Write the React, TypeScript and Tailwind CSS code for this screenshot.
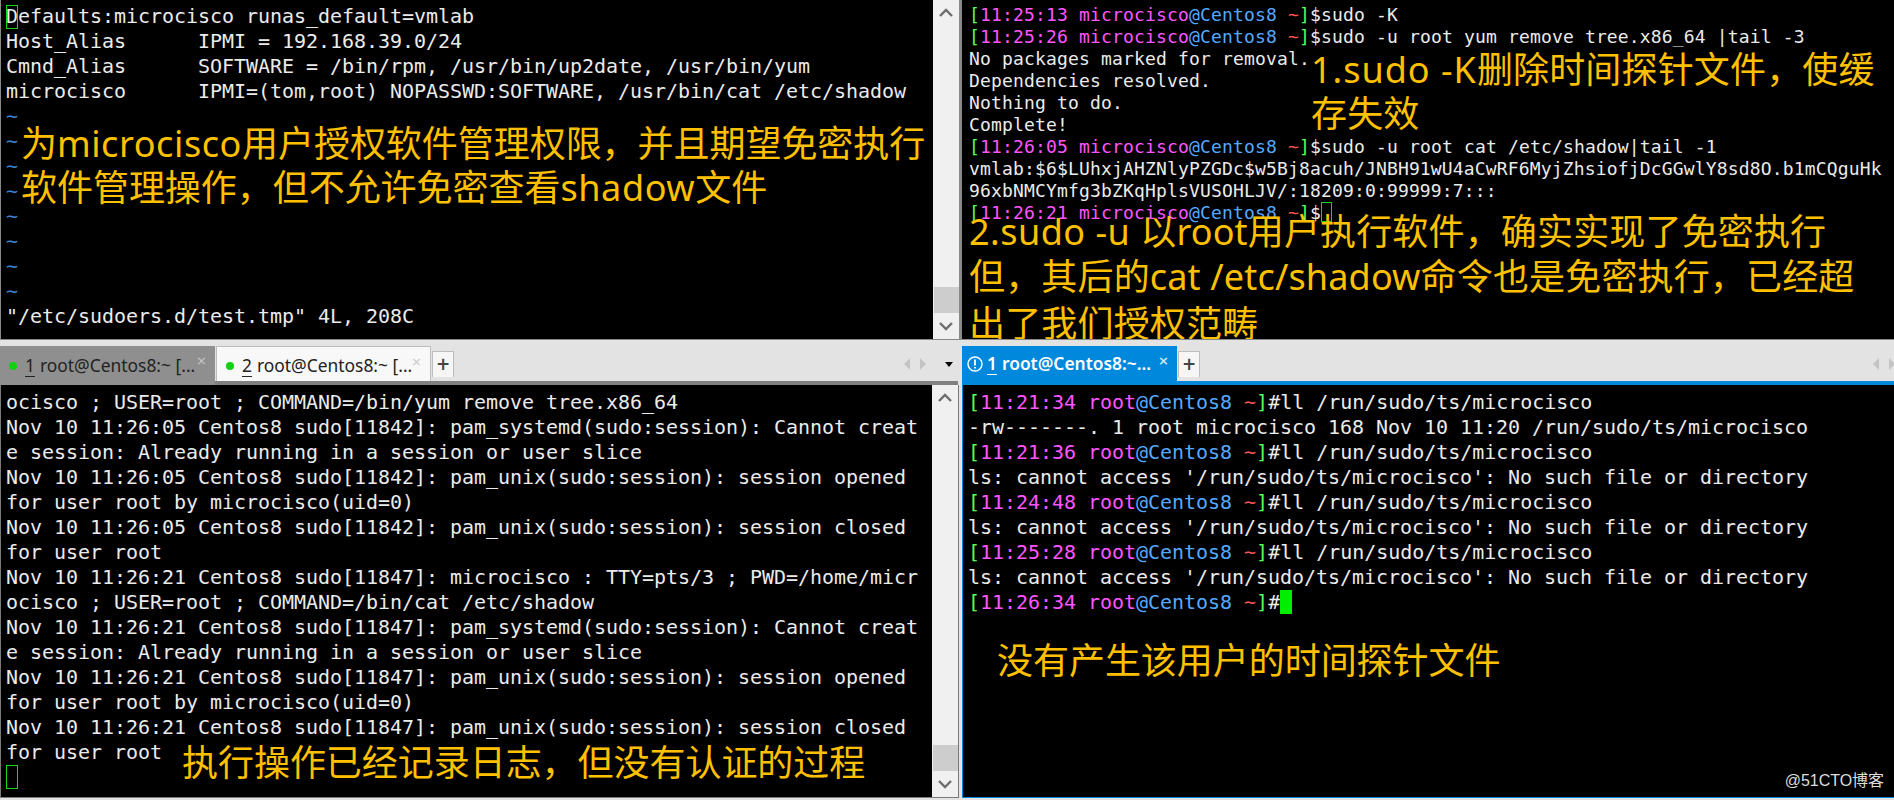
import React from "react";

const mono = "font-['DejaVu_Sans_Mono','Liberation_Mono',monospace]";

function Prompt({ time, user, sign, children }: { time: string; user: string; sign: string; children?: React.ReactNode }) {
  return (
    <>
      <span className="text-[#55ff55]">[</span>
      <span className="text-[#ff55ff]">{time} {user}</span>
      <span className="text-[#55aaff]">@Centos8</span>
      <span> </span>
      <span className="text-[#ff5555]">~</span>
      <span className="text-[#55ff55]">]</span>
      <span>{sign}</span>
      {children}
    </>
  );
}

function Line({ children }: { children?: React.ReactNode }) {
  return <div className="whitespace-pre">{children || " "}</div>;
}

function Note({ className, children }: { className: string; children: React.ReactNode }) {
  return (
    <div className={"absolute whitespace-pre text-[36px] leading-[46px] text-[#ffc000] font-['Noto_Sans','Noto_Sans_CJK_SC',sans-serif] " + className}>
      {children}
    </div>
  );
}

function Scrollbar({ thumbClass }: { thumbClass: string }) {
  return (
    <div className="w-[26px] shrink-0 bg-[#f0f0f0] flex flex-col items-center justify-between py-[8px] relative">
      <svg width="14" height="10" viewBox="0 0 14 10" className="text-[#6d6d6d]">
        <path d="M1 8 L7 2 L13 8" fill="none" stroke="currentColor" strokeWidth="2.4" />
      </svg>
      <div className={"absolute left-[1px] right-0 h-[26px] bg-[#cdcdcd] " + thumbClass} />
      <svg width="14" height="10" viewBox="0 0 14 10" className="text-[#6d6d6d]">
        <path d="M1 2 L7 8 L13 2" fill="none" stroke="currentColor" strokeWidth="2.4" />
      </svg>
    </div>
  );
}

function Arrows() {
  return (
    <div className="flex items-center gap-[10px]">
      <svg width="6" height="12" viewBox="0 0 6 12"><path d="M6 0 V12 L0 6 Z" fill="#c4c4c4" /></svg>
      <svg width="6" height="12" viewBox="0 0 6 12"><path d="M0 0 V12 L6 6 Z" fill="#c4c4c4" /></svg>
    </div>
  );
}

function Close({ light }: { light?: boolean }) {
  return (
    <span className={"absolute right-[8px] top-[8px] text-[13px] leading-[13px] font-['DejaVu_Sans',sans-serif] " + (light ? "text-[#cfe6f7]" : "text-[#c8c8c8]")}>×</span>
  );
}

function PlusTab() {
  return (
    <div className="mt-[11px] ml-[1px] h-[26px] w-[22px] bg-[#f6f6f6] border border-b-0 border-[#bdbdbd] flex items-center justify-center text-[#444] font-bold text-[17px] leading-none font-['DejaVu_Sans',sans-serif]">
      +
    </div>
  );
}

function GreenDot() {
  return <span className="w-[8px] h-[8px] rounded-full bg-[#10d010] shrink-0 ml-[9px] mr-[8px]" />;
}

const tabFont = "font-['Noto_Sans',sans-serif] text-[17.4px] leading-none";

export default function App() {
  return (
    <div className={"w-[1894px] h-[800px] overflow-hidden bg-[#e3e3e3] flex text-[#ebebeb] " + mono}>
      {/* left column */}
      <div className="w-[962px] shrink-0 flex flex-col">
        <div className="h-[339px] flex border-l border-[#8a8a8a]">
          <div className="w-[932px] bg-black pt-[4px] pl-[5px] text-[20px] leading-[25px] tracking-[-0.04px] relative overflow-hidden">
            <Line>
              <span className="relative">
                <span className="absolute left-0 top-[1px] w-[12px] h-[24px] border border-[#15d815]" />
                Defaults:microcisco runas_default=vmlab
              </span>
            </Line>
            <Line>Host_Alias      IPMI = 192.168.39.0/24</Line>
            <Line>Cmnd_Alias      SOFTWARE = /bin/rpm, /usr/bin/up2date, /usr/bin/yum</Line>
            <Line>microcisco      IPMI=(tom,root) NOPASSWD:SOFTWARE, /usr/bin/cat /etc/shadow</Line>
            {Array.from({ length: 8 }).map((_, i) => (
              <Line key={i}><span className="text-[#3f86d8]">~</span></Line>
            ))}
            <Line>"/etc/sudoers.d/test.tmp" 4L, 208C</Line>
            <Note className="left-[20px] top-[121px]">为<span className="tracking-[0.6px]">microcisco</span>用户授权软件管理权限，并且期望免密执行</Note>
            <Note className="left-[20px] top-[165px]">软件管理操作，但不允许免密查看<span className="tracking-[0.6px]">shadow</span>文件</Note>
          </div>
          <Scrollbar thumbClass="top-[287px]" />
          <div className="flex-1 bg-[#8a8a8a]" />
        </div>
        <div className="h-[1px] bg-[#8a8a8a]" />
        {/* left tab bar */}
        <div className="h-[45px] flex relative">
          <div className="absolute left-[215px] right-[4px] bottom-0 h-[4px] bg-[#808080]" />
          <div className="flex items-start mt-[6px] relative">
            <div className={"relative w-[215px] h-[39px] bg-[#8f8f8f] flex items-center text-[#222] " + tabFont}>
              <GreenDot />
              <span className="underline underline-offset-[4px] mr-[5px]">1</span>
              <span>root@Centos8:~ [...</span>
              <Close />
            </div>
            <div className={"relative ml-[1px] w-[215px] h-[35px] bg-[#f8f8f8] border border-b-0 border-[#bdbdbd] flex items-center text-[#222] pt-[3px] " + tabFont}>
              <GreenDot />
              <span className="underline underline-offset-[4px] mr-[5px]">2</span>
              <span>root@Centos8:~ [...</span>
              <Close />
            </div>
          </div>
          <PlusTab />
          <div className="ml-auto mr-[9px] flex items-center gap-[19px] mt-[5px] h-[36px] pt-[2px]">
            <Arrows />
            <svg width="8" height="5" viewBox="0 0 8 5"><path d="M0 0 H8 L4 5 Z" fill="#000" /></svg>
          </div>
        </div>
        {/* left lower pane */}
        <div className="w-[959px] h-[413px] flex border-l border-r border-b border-[#7a7a7a]">
          <div className="w-[931px] bg-black pt-[5px] pl-[5px] text-[20px] leading-[25px] tracking-[-0.04px] relative overflow-hidden">
            <Line>ocisco ; USER=root ; COMMAND=/bin/yum remove tree.x86_64</Line>
            <Line>Nov 10 11:26:05 Centos8 sudo[11842]: pam_systemd(sudo:session): Cannot creat</Line>
            <Line>e session: Already running in a session or user slice</Line>
            <Line>Nov 10 11:26:05 Centos8 sudo[11842]: pam_unix(sudo:session): session opened</Line>
            <Line>for user root by microcisco(uid=0)</Line>
            <Line>Nov 10 11:26:05 Centos8 sudo[11842]: pam_unix(sudo:session): session closed</Line>
            <Line>for user root</Line>
            <Line>Nov 10 11:26:21 Centos8 sudo[11847]: microcisco : TTY=pts/3 ; PWD=/home/micr</Line>
            <Line>ocisco ; USER=root ; COMMAND=/bin/cat /etc/shadow</Line>
            <Line>Nov 10 11:26:21 Centos8 sudo[11847]: pam_systemd(sudo:session): Cannot creat</Line>
            <Line>e session: Already running in a session or user slice</Line>
            <Line>Nov 10 11:26:21 Centos8 sudo[11847]: pam_unix(sudo:session): session opened</Line>
            <Line>for user root by microcisco(uid=0)</Line>
            <Line>Nov 10 11:26:21 Centos8 sudo[11847]: pam_unix(sudo:session): session closed</Line>
            <Line>for user root</Line>
            <div className="w-[12px] h-[24px] border border-[#15d815]" />
            <Note className="left-[181px] top-[355px]">执行操作已经记录日志，但没有认证的过程</Note>
          </div>
          <Scrollbar thumbClass="top-[360px]" />
        </div>
      </div>
      {/* right column */}
      <div className="flex-1 flex flex-col">
        <div className="h-[339px] bg-black pt-[4px] pl-[7px] text-[18px] leading-[22px] tracking-[0.16px] relative overflow-hidden">
          <Line><Prompt time="11:25:13" user="microcisco" sign="$">sudo -K</Prompt></Line>
          <Line><Prompt time="11:25:26" user="microcisco" sign="$">sudo -u root yum remove tree.x86_64 |tail -3</Prompt></Line>
          <Line>No packages marked for removal.</Line>
          <Line>Dependencies resolved.</Line>
          <Line>Nothing to do.</Line>
          <Line>Complete!</Line>
          <Line><Prompt time="11:26:05" user="microcisco" sign="$">sudo -u root cat /etc/shadow|tail -1</Prompt></Line>
          <Line>vmlab:$6$LUhxjAHZNlyPZGDc$w5Bj8acuh/JNBH91wU4aCwRF6MyjZhsiofjDcGGwlY8sd8O.b1mCQguHk</Line>
          <Line>96xbNMCYmfg3bZKqHplsVUSOHLJV/:18209:0:99999:7:::</Line>
          <Line>
            <Prompt time="11:26:21" user="microcisco" sign="$" />
            <span className="inline-block align-top w-[11px] h-[20px] border border-[#15d815]" />
          </Line>
          <Note className="left-[349px] top-[47px]"><span className="tracking-[1px]">1.sudo -K</span>删除时间探针文件，使缓</Note>
          <Note className="left-[349px] top-[91px]">存失效</Note>
          <Note className="left-[7px] top-[209px]"><span className="tracking-[0.5px]">2.sudo -u </span>以root用户执行软件，确实实现了免密执行</Note>
          <Note className="left-[7px] top-[254px]">但，其后的cat /etc/shadow命令也是免密执行，已经超</Note>
          <Note className="left-[7px] top-[301px]">出了我们授权范畴</Note>
        </div>
        <div className="h-[1px] bg-[#8a8a8a]" />
        <div className="h-[45px] flex flex-col">
          <div className="flex flex-1">
            <div className={"relative mt-[6px] w-[215px] h-[35px] bg-[#0088dd] flex items-center text-white font-semibold " + tabFont}>
              <svg width="16" height="16" viewBox="0 0 16 16" className="ml-[5px] mr-[4px] shrink-0">
                <circle cx="8" cy="8" r="7" fill="none" stroke="#fff" strokeWidth="1.4" />
                <path d="M8 3.5 V9.5 M8 11 V12.6" stroke="#fff" strokeWidth="1.8" />
              </svg>
              <span className="underline underline-offset-[4px] mr-[5px]">1</span>
              <span>root@Centos8:~...</span>
              <Close light />
            </div>
            <PlusTab />
            <div className="ml-auto mr-[-1px] flex items-center mt-[5px] h-[36px] pt-[2px]"><Arrows /></div>
          </div>
          <div className="h-[4px] bg-[#0088dd]" />
        </div>
        <div className="h-[413px] border-l border-b border-[#0088dd] bg-black pt-[5px] pl-[5px] text-[20px] leading-[25px] tracking-[-0.04px] relative overflow-hidden">
          <Line><Prompt time="11:21:34" user="root" sign="#">ll /run/sudo/ts/microcisco</Prompt></Line>
          <Line>-rw-------. 1 root microcisco 168 Nov 10 11:20 /run/sudo/ts/microcisco</Line>
          <Line><Prompt time="11:21:36" user="root" sign="#">ll /run/sudo/ts/microcisco</Prompt></Line>
          <Line>ls: cannot access '/run/sudo/ts/microcisco': No such file or directory</Line>
          <Line><Prompt time="11:24:48" user="root" sign="#">ll /run/sudo/ts/microcisco</Prompt></Line>
          <Line>ls: cannot access '/run/sudo/ts/microcisco': No such file or directory</Line>
          <Line><Prompt time="11:25:28" user="root" sign="#">ll /run/sudo/ts/microcisco</Prompt></Line>
          <Line>ls: cannot access '/run/sudo/ts/microcisco': No such file or directory</Line>
          <Line>
            <Prompt time="11:26:34" user="root" sign="#" />
            <span className="inline-block align-top w-[12px] h-[24px] bg-[#00ee00]" />
          </Line>
          <Note className="left-[34px] top-[253px]">没有产生该用户的时间探针文件</Note>
          <div className="absolute right-[10px] bottom-[6px] text-[#dddddd] text-[16px] leading-[20px] font-['Liberation_Sans','Noto_Sans_CJK_SC',sans-serif]">@51CTO博客</div>
        </div>
      </div>
    </div>
  );
}
